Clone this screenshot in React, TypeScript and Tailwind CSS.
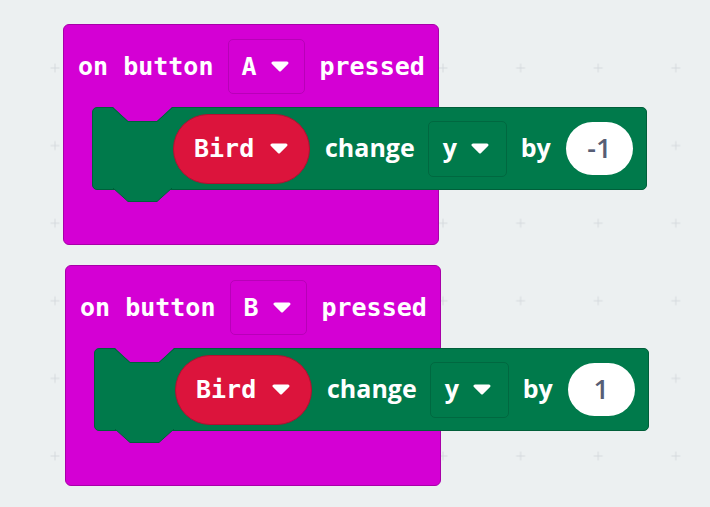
import React from "react"

const mono = "font-['DejaVu_Sans_Mono',monospace] font-bold text-[25px] leading-none text-white"
const sans = "font-['Open_Sans',sans-serif] font-bold text-[25px] leading-none text-white pb-[3px]"

function Caret() {
  return (
    <svg width="18" height="11" viewBox="0 0 18 11" className="shrink-0">
      <path d="M2 2 L16 2 L9 9 Z" fill="#fff" stroke="#fff" strokeWidth="3" strokeLinejoin="round" />
    </svg>
  )
}

function GridBackground() {
  return (
    <svg className="absolute inset-0 h-full w-full">
      <defs>
        <pattern id="grid" x="16.2" y="29.2" width="77.6" height="77.6" patternUnits="userSpaceOnUse">
          <path d="M34.3 38.8 H43.3 M38.8 34.3 V43.3" stroke="#d5dade" strokeWidth="1" />
        </pattern>
      </defs>
      <rect width="100%" height="100%" fill="url(#grid)" />
    </svg>
  )
}

function ChangeBlock({ by }: { by: string }) {
  return (
    <div className="relative ml-[28px] flex h-[83px] w-[555px] items-center rounded-[5px] border border-[#005f3a] bg-[#007a4b] pl-[80px]">
      {/* previous-statement notch */}
      <svg width="60" height="16" viewBox="0 0 60 16" className="absolute left-[20px] top-[-1px]">
        <path d="M0 0 L15 14 L44 14 L59 0 Z" fill="#d400d4" />
        <path d="M0 1 L15 14.5 L44 14.5 L59 1" fill="none" stroke="#005f3a" strokeWidth="1" />
      </svg>
      {/* next-statement tab */}
      <svg width="60" height="15" viewBox="0 0 60 15" className="absolute left-[20px] bottom-[-14px]">
        <path d="M0 0 L15 13.5 L44 13.5 L59 0 Z" fill="#007a4b" stroke="#005f3a" strokeWidth="1" />
        <rect x="1" y="-1" width="57" height="2" fill="#007a4b" />
      </svg>

      <div className="flex h-[70px] w-[137px] shrink-0 items-center gap-[16px] rounded-full border border-[#b30f31] bg-[#dc143c] pl-[20px]">
        <span className={mono}>Bird</span>
        <Caret />
      </div>
      <span className={`${sans} ml-[15px]`}>change</span>
      <div className="ml-[13px] flex h-[56px] w-[79px] shrink-0 items-center gap-[14px] rounded-[5px] border border-[#006840] pl-[14px]">
        <span className={sans}>y</span>
        <Caret />
      </div>
      <span className={`${sans} ml-[14px]`}>by</span>
      <div className="ml-[15px] flex h-[53px] w-[67px] shrink-0 items-center justify-center rounded-full bg-white">
        <span className="pb-[2px] font-['Open_Sans',sans-serif] text-[27px] font-semibold leading-none text-[#575e75]">{by}</span>
      </div>
    </div>
  )
}

function OnButton({ button, by, className }: { button: string; by: string; className: string }) {
  return (
    <div className={`absolute h-[221px] w-[376px] rounded-[6px] border border-[#a800a8] bg-[#d400d4] ${className}`}>
      <div className="flex h-[82px] items-center pl-[14px]">
        <span className={mono}>on button</span>
        <div className="ml-[15px] flex h-[55px] w-[77px] shrink-0 items-center gap-[14px] rounded-[5px] border border-[#b800b8] pl-[12px]">
          <span className={mono}>{button}</span>
          <Caret />
        </div>
        <span className={`${mono} ml-[14px]`}>pressed</span>
      </div>
      <ChangeBlock by={by} />
    </div>
  )
}

export default function App() {
  return (
    <div className="relative h-[507px] w-[710px] overflow-hidden bg-[#ecf0f1]">
      <GridBackground />
      <OnButton button="A" by="-1" className="left-[63px] top-[24px]" />
      <OnButton button="B" by="1" className="left-[65px] top-[265px]" />
    </div>
  )
}
